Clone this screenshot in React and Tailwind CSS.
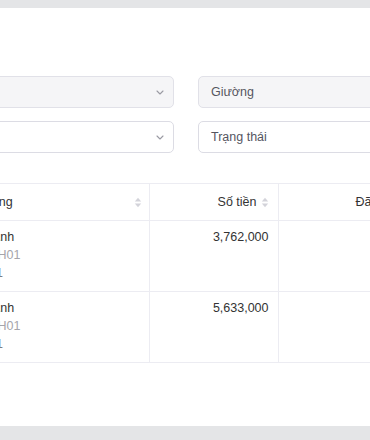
import React from 'react'

const FONT = { fontFamily: '"Liberation Sans", Arial, sans-serif' }

function Chevron() {
  return (
    <svg width="8" height="5" viewBox="0 0 8 5" fill="none" className="shrink-0">
      <path d="M1 1 L4 4 L7 1" stroke="#9a9aa3" strokeWidth="1.1" strokeLinecap="round" strokeLinejoin="round" />
    </svg>
  )
}

function SortIcon() {
  return (
    <svg width="8" height="11" viewBox="0 0 8 11" className="shrink-0">
      <path d="M4 0.8 L7.2 4.4 H0.8 Z" fill="#d3d3da" />
      <path d="M4 10.2 L7.2 6.6 H0.8 Z" fill="#d3d3da" />
    </svg>
  )
}

function SelectBox({ value, disabled }) {
  return (
    <div
      className={`flex h-[32px] items-center justify-between rounded-[5px] border pl-[12px] pr-[9px] text-[12.5px] text-[#55555f] ${disabled ? 'border-[#e1e1e8] bg-[#f5f5f7]' : 'border-[#dcdce4] bg-white'}`}
    >
      <span>{value}</span>
      <Chevron />
    </div>
  )
}

function InputBox({ placeholder, disabled }) {
  return (
    <div
      className={`flex h-[32px] items-center rounded-[5px] border pl-[12px] text-[12.5px] text-[#55555f] ${disabled ? 'border-[#e1e1e8] bg-[#f5f5f7]' : 'border-[#dcdce4] bg-white'}`}
    >
      {placeholder}
    </div>
  )
}

const ROWS = [
  { name: 'Nguyễn Anh', room: 'Phòng: PH01', bed: 'Giường: 1', amount: '3,762,000' },
  { name: 'Nguyễn Anh', room: 'Phòng: PH01', bed: 'Giường: 1', amount: '5,633,000' },
]

export default function App() {
  return (
    <div className="h-[440px] w-[370px] overflow-hidden bg-[#e4e5e7] pt-[8px]" style={FONT}>
      <div className="h-[418px] overflow-hidden bg-white">
        <div className="-ml-[150px] w-[800px] pt-[68px]">
          <div className="grid grid-cols-[324px_324px] gap-x-[24px] gap-y-[13px]">
            <SelectBox value="" disabled />
            <InputBox placeholder="Giường" disabled />
            <SelectBox value="" />
            <InputBox placeholder="Trạng thái" />
          </div>

          <table className="ml-[80px] mt-[30px] border-collapse text-[12.5px]">
            <thead>
              <tr className="border-y border-[#ececf2]">
                <th className="h-[37px] w-[219px] border-r border-[#ececf2] pl-[16px] pr-[7px] font-normal text-[#333]">
                  <div className="flex items-center justify-between">
                    <span>Khách hàng</span>
                    <SortIcon />
                  </div>
                </th>
                <th className="w-[129px] border-r border-[#ececf2] pr-[9px] font-normal text-[#333]">
                  <div className="flex items-center justify-end gap-[4px]">
                    <span>Số tiền</span>
                    <SortIcon />
                  </div>
                </th>
                <th className="w-[177px] pr-[9px] font-normal text-[#333]">
                  <div className="flex items-center justify-end gap-[4px]">
                    <span>Đã thanh toán</span>
                    <SortIcon />
                  </div>
                </th>
              </tr>
            </thead>
            <tbody>
              {ROWS.map((row, i) => (
                <tr key={i} className="border-b border-[#ececf2] align-top">
                  <td className="h-[71px] border-r border-[#ececf2] pl-[16px] pt-[7px] leading-[18px]">
                    <div className="text-[#333]">{row.name}</div>
                    <div className="text-[#a5a5ab]">{row.room}</div>
                    <div className="text-[#7c7c84]">{row.bed}</div>
                  </td>
                  <td className="border-r border-[#ececf2] pr-[9px] pt-[7px] text-right leading-[18px] text-[#333]">
                    {row.amount}
                  </td>
                  <td className="pt-[7px] pr-[9px] text-right leading-[18px] text-[#333]"></td>
                </tr>
              ))}
            </tbody>
          </table>
        </div>
      </div>
    </div>
  )
}
